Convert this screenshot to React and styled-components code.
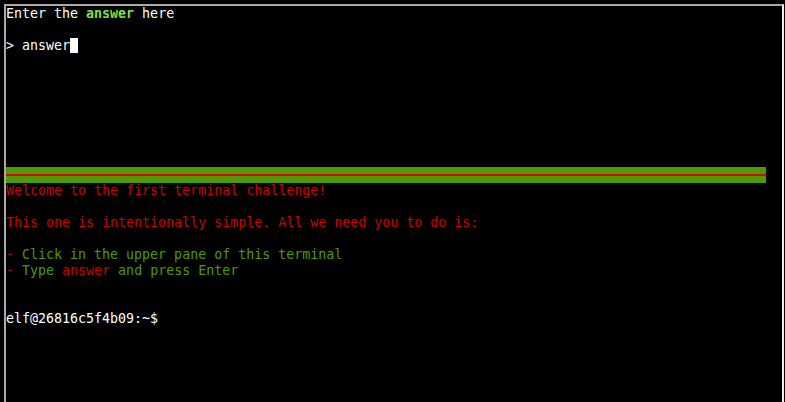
import React from "react";
import styled, { createGlobalStyle } from "styled-components";

const GlobalStyle = createGlobalStyle`
  html, body {
    margin: 0;
    padding: 0;
    background: #000;
    height: 100%;
    overflow: hidden;
  }
  #root {
    height: 100%;
  }
`;

const Frame = styled.div`
  box-sizing: border-box;
  height: calc(100% - 4px);
  margin: 4px 1px 0 4px;
  border-top: 2px solid #aaaaaa;
  border-left: 2px solid #aaaaaa;
  border-right: 2px solid #eeeeee;
  background: #000;
  display: flex;
  flex-direction: column;
  font-family: "DejaVu Sans Mono", "Liberation Mono", monospace;
  font-size: 13.3px;
  line-height: 16px;
  color: #ffffff;
`;

const Pane = styled.div`
  width: 760px;
  height: ${(p) => p.$lines * 16}px;
  white-space: pre;
`;

const Line = styled.div`
  height: 16px;
  color: ${(p) => p.$color || "inherit"};
`;

const Highlight = styled.span`
  color: ${(p) => p.$color};
  font-weight: ${(p) => (p.$bold ? "bold" : "normal")};
`;

const Cursor = styled.span`
  display: inline-block;
  width: 8px;
  height: 15px;
  vertical-align: top;
  background: #ffffff;
`;

const StatusBar = styled.div`
  width: 760px;
  height: 16px;
  margin-top: 1px;
  background: #4e9a06;
  display: flex;
  align-items: center;
`;

const Divider = styled.div`
  width: 100%;
  height: 2px;
  background: #e00000;
`;

const RED = "#cc0000";
const GREEN = "#4e9a06";

export default function App() {
  return (
    <>
      <GlobalStyle />
      <Frame>
        <Pane $lines={10}>
          <Line>
            Enter the <Highlight $color="#7ee13a" $bold>answer</Highlight> here
          </Line>
          <Line />
          <Line>
            {"> answer"}
            <Cursor />
          </Line>
        </Pane>
        <StatusBar>
          <Divider />
        </StatusBar>
        <Pane $lines={9}>
          <Line $color={RED}>Welcome to the first terminal challenge!</Line>
          <Line />
          <Line $color={RED}>
            This one is intentionally simple. All we need you to do is:
          </Line>
          <Line />
          <Line $color={GREEN}>
            <Highlight $color={RED}>-</Highlight> Click in the upper pane of this terminal
          </Line>
          <Line $color={GREEN}>
            <Highlight $color={RED}>-</Highlight> Type <Highlight $color={RED}>answer</Highlight> and press Enter
          </Line>
          <Line />
          <Line />
          <Line>elf@26816c5f4b09:~$ </Line>
        </Pane>
      </Frame>
    </>
  );
}
